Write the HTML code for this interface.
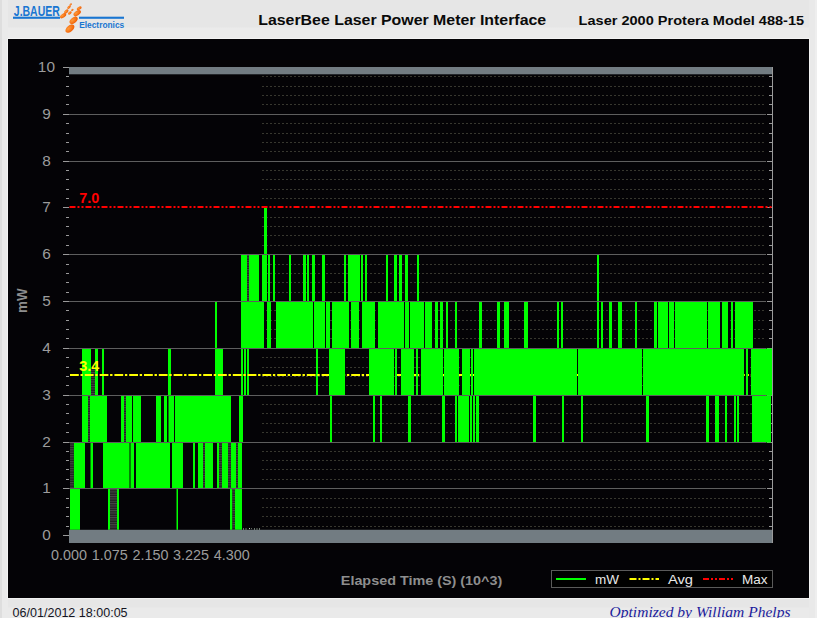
<!DOCTYPE html>
<html><head><meta charset="utf-8"><title>LaserBee Laser Power Meter Interface</title>
<style>
html,body{margin:0;padding:0;}
body{width:817px;height:618px;overflow:hidden;background:linear-gradient(180deg,#e6e6e6 0,#e6e6e6 27px,#ebebeb 28px,#ebebeb 39px,#e6e6e6 40px,#e6e6e6 607px,#eaeaea 608px);font-family:"Liberation Sans",sans-serif;position:relative;}
#plot{position:absolute;left:8px;top:39px;width:801px;height:559px;background:#040306;box-shadow:0 0 0 0.6px #f8f8f8;}
#edgeL{position:absolute;left:0;top:0;width:8px;height:618px;background:linear-gradient(90deg,#dedede 0,#dedede 2px,#eaeaea 2.5px,#eaeaea 8px);}
#edgeR{position:absolute;left:809px;top:0;width:8px;height:618px;background:linear-gradient(90deg,#e9e9e9 0,#e9e9e9 5.5px,#dcdcdc 6px,#eeeeee 6.5px,#eeeeee 8px);}
svg{position:absolute;left:0;top:0;}
svg text{font-family:"Liberation Sans",sans-serif;}
</style></head><body>
<div id="edgeL"></div><div id="edgeR"></div>
<div id="plot"></div>
<svg width="817" height="618" viewBox="0 0 817 618">
<defs>
<pattern id="hatch" width="4" height="2.34" patternUnits="userSpaceOnUse"><rect width="4" height="2.34" fill="#1f1f1f"/><rect y="0" width="4" height="1.1" fill="#454545"/></pattern>
<clipPath id="cl"><rect x="0" y="360" width="329" height="30"/></clipPath><clipPath id="cr"><rect x="329" y="360" width="450" height="30"/></clipPath>
<radialGradient id="og" cx="40%" cy="35%" r="70%"><stop offset="0" stop-color="#ff9a3a"/><stop offset="1" stop-color="#f05a00"/></radialGradient>
</defs>
<!-- header -->
<g id="logo">
<text x="13.8" y="16.3" font-size="14.6" font-weight="bold" fill="#1976d2" textLength="46" lengthAdjust="spacingAndGlyphs">J.BAUER</text>
<rect x="13" y="16.7" width="47" height="2.1" fill="#1976d2"/>
<rect x="79" y="16.7" width="45" height="2.1" fill="#1976d2"/>
<text x="79.2" y="28.4" font-size="9.4" font-weight="bold" fill="#1976d2" textLength="45" lengthAdjust="spacingAndGlyphs">Electronics</text>
<g fill="url(#og)">
<ellipse cx="69.9" cy="28.7" rx="5.3" ry="3.1" transform="rotate(-40 69.9 28.7)"/>
<ellipse cx="73.6" cy="20.3" rx="4.7" ry="2.8" transform="rotate(-40 73.6 20.3)"/>
<ellipse cx="77.2" cy="13.2" rx="4.2" ry="2.3" transform="rotate(-35 77.2 13.2)"/>
<ellipse cx="79.2" cy="8.3" rx="2.7" ry="1.5" transform="rotate(-30 79.2 8.3)"/>
<ellipse cx="63.1" cy="15.7" rx="3.5" ry="1.9" transform="rotate(-35 63.1 15.7)"/>
<ellipse cx="66.3" cy="11.5" rx="2.6" ry="1.5" transform="rotate(-40 66.3 11.5)"/>
<ellipse cx="69" cy="7.2" rx="2.1" ry="1.2" transform="rotate(-45 69 7.2)"/>
<ellipse cx="70.7" cy="4.4" rx="1.4" ry="0.9" transform="rotate(-45 70.7 4.4)"/>
<ellipse cx="69.8" cy="13" rx="2.1" ry="1.3" transform="rotate(-38 69.8 13)"/>
<ellipse cx="72.3" cy="10" rx="1.4" ry="0.9" transform="rotate(-38 72.3 10)"/>
</g>
</g>
<text x="258.2" y="24.6" font-size="14.2" font-weight="bold" fill="#0a0a0a" textLength="288" lengthAdjust="spacingAndGlyphs">LaserBee Laser Power Meter Interface</text>
<text x="578.6" y="25" font-size="13.5" font-weight="bold" fill="#0a0a0a" textLength="225.5" lengthAdjust="spacingAndGlyphs">Laser 2000 Protera Model 488-15</text>
<!-- chart -->
<path d="M262 526.5H766M262 516.5H766M262 507.5H766M262 498.5H766M262 479.5H766M262 469.5H766M262 460.5H766M262 451.5H766M262 432.5H766M262 423.5H766M262 413.5H766M262 404.5H766M262 385.5H766M262 376.5H766M262 367.5H766M262 357.5H766M262 338.5H766M262 329.5H766M262 320.5H766M262 310.5H766M262 292.5H766M262 282.5H766M262 273.5H766M262 264.5H766M262 245.5H766M262 235.5H766M262 226.5H766M262 217.5H766M262 198.5H766M262 189.5H766M262 179.5H766M262 170.5H766M262 151.5H766M262 142.5H766M262 133.5H766M262 123.5H766M262 104.5H766M262 95.5H766M262 86.5H766M262 76.5H766" stroke="#37372f" stroke-width="1" stroke-dasharray="2 2" fill="none"/><path d="M769 526.5H772.5M769 516.5H772.5M769 507.5H772.5M769 498.5H772.5M767 488.5H772.5M769 479.5H772.5M769 469.5H772.5M769 460.5H772.5M769 451.5H772.5M767 442.5H772.5M769 432.5H772.5M769 423.5H772.5M769 413.5H772.5M769 404.5H772.5M767 395.5H772.5M769 385.5H772.5M769 376.5H772.5M769 367.5H772.5M769 357.5H772.5M767 348.5H772.5M769 338.5H772.5M769 329.5H772.5M769 320.5H772.5M769 310.5H772.5M767 301.5H772.5M769 292.5H772.5M769 282.5H772.5M769 273.5H772.5M769 264.5H772.5M767 254.5H772.5M769 245.5H772.5M769 235.5H772.5M769 226.5H772.5M769 217.5H772.5M767 207.5H772.5M769 198.5H772.5M769 189.5H772.5M769 179.5H772.5M769 170.5H772.5M767 161.5H772.5M769 151.5H772.5M769 142.5H772.5M769 133.5H772.5M769 123.5H772.5M767 114.5H772.5M769 104.5H772.5M769 95.5H772.5M769 86.5H772.5M769 76.5H772.5M767 67.5H772.5" stroke="#9a9a9a" stroke-width="1" fill="none"/><path d="M70 375H772" stroke="#ffff00" stroke-width="2.2" stroke-dasharray="8.8 1.7 2.4 1.9" fill="none" clip-path="url(#cr)"/><rect x="70" y="488.5" width="10" height="41.3" fill="#00ff00"/><rect x="108" y="488.5" width="2" height="41.3" fill="#00ff00"/><rect x="117" y="488.5" width="2" height="41.3" fill="#00ff00"/><rect x="176.5" y="488.5" width="1.5" height="41.3" fill="#00ff00"/><rect x="230" y="488.5" width="2.5" height="41.3" fill="#00ff00"/><rect x="235" y="488.5" width="7" height="41.3" fill="#00ff00"/><rect x="110" y="488.5" width="7" height="41.3" fill="url(#hatch)"/><rect x="232.5" y="488.5" width="2.5" height="41.3" fill="url(#hatch)"/><rect x="73.7" y="442.5" width="11.3" height="46.0" fill="#00ff00"/><rect x="90.5" y="442.5" width="2.5" height="46.0" fill="#00ff00"/><rect x="103" y="442.5" width="26.5" height="46.0" fill="#00ff00"/><rect x="130.5" y="442.5" width="3.5" height="46.0" fill="#00ff00"/><rect x="136" y="442.5" width="34" height="46.0" fill="#00ff00"/><rect x="172" y="442.5" width="11" height="46.0" fill="#00ff00"/><rect x="193" y="442.5" width="2" height="46.0" fill="#00ff00"/><rect x="198" y="442.5" width="5" height="46.0" fill="#00ff00"/><rect x="205" y="442.5" width="8" height="46.0" fill="#00ff00"/><rect x="217" y="442.5" width="2" height="46.0" fill="#00ff00"/><rect x="222" y="442.5" width="6" height="46.0" fill="#00ff00"/><rect x="231" y="442.5" width="5" height="46.0" fill="#00ff00"/><rect x="238" y="442.5" width="4" height="46.0" fill="#00ff00"/><rect x="70" y="442.5" width="3.7" height="46.0" fill="url(#hatch)"/><rect x="203" y="442.5" width="2" height="46.0" fill="url(#hatch)"/><rect x="219" y="442.5" width="3" height="46.0" fill="url(#hatch)"/><rect x="228" y="442.5" width="3" height="46.0" fill="url(#hatch)"/><rect x="236" y="442.5" width="2" height="46.0" fill="url(#hatch)"/><rect x="82" y="395.5" width="6" height="47.0" fill="#00ff00"/><rect x="90" y="395.5" width="17" height="47.0" fill="#00ff00"/><rect x="121" y="395.5" width="3" height="47.0" fill="#00ff00"/><rect x="126" y="395.5" width="6" height="47.0" fill="#00ff00"/><rect x="133" y="395.5" width="8" height="47.0" fill="#00ff00"/><rect x="156" y="395.5" width="5" height="47.0" fill="#00ff00"/><rect x="164" y="395.5" width="3" height="47.0" fill="#00ff00"/><rect x="168.5" y="395.5" width="5.5" height="47.0" fill="#00ff00"/><rect x="175" y="395.5" width="56" height="47.0" fill="#00ff00"/><rect x="239" y="395.5" width="4" height="47.0" fill="#00ff00"/><rect x="330" y="395.5" width="2" height="47.0" fill="#00ff00"/><rect x="373" y="395.5" width="2" height="47.0" fill="#00ff00"/><rect x="380" y="395.5" width="2" height="47.0" fill="#00ff00"/><rect x="408" y="395.5" width="3" height="47.0" fill="#00ff00"/><rect x="442" y="395.5" width="3" height="47.0" fill="#00ff00"/><rect x="455" y="395.5" width="2" height="47.0" fill="#00ff00"/><rect x="458" y="395.5" width="11" height="47.0" fill="#00ff00"/><rect x="470" y="395.5" width="2" height="47.0" fill="#00ff00"/><rect x="473" y="395.5" width="2" height="47.0" fill="#00ff00"/><rect x="476" y="395.5" width="3" height="47.0" fill="#00ff00"/><rect x="533" y="395.5" width="3" height="47.0" fill="#00ff00"/><rect x="562" y="395.5" width="2" height="47.0" fill="#00ff00"/><rect x="581" y="395.5" width="2" height="47.0" fill="#00ff00"/><rect x="646" y="395.5" width="3" height="47.0" fill="#00ff00"/><rect x="706" y="395.5" width="3" height="47.0" fill="#00ff00"/><rect x="715" y="395.5" width="4" height="47.0" fill="#00ff00"/><rect x="725" y="395.5" width="2" height="47.0" fill="#00ff00"/><rect x="734" y="395.5" width="2" height="47.0" fill="#00ff00"/><rect x="737" y="395.5" width="2" height="47.0" fill="#00ff00"/><rect x="752" y="395.5" width="19" height="47.0" fill="#00ff00"/><rect x="88" y="395.5" width="2" height="47.0" fill="url(#hatch)"/><rect x="124" y="395.5" width="2" height="47.0" fill="url(#hatch)"/><rect x="82" y="348.5" width="9" height="47.0" fill="#00ff00"/><rect x="95" y="348.5" width="3" height="47.0" fill="#00ff00"/><rect x="102" y="348.5" width="2" height="47.0" fill="#00ff00"/><rect x="168" y="348.5" width="3" height="47.0" fill="#00ff00"/><rect x="215" y="348.5" width="8" height="47.0" fill="#00ff00"/><rect x="241" y="348.5" width="2" height="47.0" fill="#00ff00"/><rect x="244" y="348.5" width="2" height="47.0" fill="#00ff00"/><rect x="247" y="348.5" width="2" height="47.0" fill="#00ff00"/><rect x="316" y="348.5" width="2" height="47.0" fill="#00ff00"/><rect x="329" y="348.5" width="16" height="47.0" fill="#00ff00"/><rect x="369" y="348.5" width="25" height="47.0" fill="#00ff00"/><rect x="395" y="348.5" width="2" height="47.0" fill="#00ff00"/><rect x="401" y="348.5" width="13" height="47.0" fill="#00ff00"/><rect x="416" y="348.5" width="2" height="47.0" fill="#00ff00"/><rect x="421" y="348.5" width="22" height="47.0" fill="#00ff00"/><rect x="444" y="348.5" width="15" height="47.0" fill="#00ff00"/><rect x="462" y="348.5" width="8" height="47.0" fill="#00ff00"/><rect x="471" y="348.5" width="2" height="47.0" fill="#00ff00"/><rect x="474" y="348.5" width="103" height="47.0" fill="#00ff00"/><rect x="578" y="348.5" width="64" height="47.0" fill="#00ff00"/><rect x="643" y="348.5" width="101" height="47.0" fill="#00ff00"/><rect x="746" y="348.5" width="2" height="47.0" fill="#00ff00"/><rect x="751" y="348.5" width="21" height="47.0" fill="#00ff00"/><rect x="215" y="301.5" width="2" height="47.0" fill="#00ff00"/><rect x="241" y="301.5" width="23" height="47.0" fill="#00ff00"/><rect x="267" y="301.5" width="4" height="47.0" fill="#00ff00"/><rect x="276" y="301.5" width="37" height="47.0" fill="#00ff00"/><rect x="314" y="301.5" width="11" height="47.0" fill="#00ff00"/><rect x="326" y="301.5" width="4" height="47.0" fill="#00ff00"/><rect x="332" y="301.5" width="17" height="47.0" fill="#00ff00"/><rect x="351" y="301.5" width="8" height="47.0" fill="#00ff00"/><rect x="362" y="301.5" width="13" height="47.0" fill="#00ff00"/><rect x="378" y="301.5" width="26" height="47.0" fill="#00ff00"/><rect x="405" y="301.5" width="4" height="47.0" fill="#00ff00"/><rect x="410" y="301.5" width="14" height="47.0" fill="#00ff00"/><rect x="425" y="301.5" width="7" height="47.0" fill="#00ff00"/><rect x="435" y="301.5" width="3" height="47.0" fill="#00ff00"/><rect x="440" y="301.5" width="3" height="47.0" fill="#00ff00"/><rect x="446" y="301.5" width="2" height="47.0" fill="#00ff00"/><rect x="455" y="301.5" width="2" height="47.0" fill="#00ff00"/><rect x="479" y="301.5" width="3" height="47.0" fill="#00ff00"/><rect x="497" y="301.5" width="3" height="47.0" fill="#00ff00"/><rect x="504" y="301.5" width="5" height="47.0" fill="#00ff00"/><rect x="524" y="301.5" width="4" height="47.0" fill="#00ff00"/><rect x="557" y="301.5" width="2" height="47.0" fill="#00ff00"/><rect x="561" y="301.5" width="2" height="47.0" fill="#00ff00"/><rect x="597" y="301.5" width="2" height="47.0" fill="#00ff00"/><rect x="601" y="301.5" width="2" height="47.0" fill="#00ff00"/><rect x="609" y="301.5" width="3" height="47.0" fill="#00ff00"/><rect x="618" y="301.5" width="4" height="47.0" fill="#00ff00"/><rect x="635" y="301.5" width="2" height="47.0" fill="#00ff00"/><rect x="654" y="301.5" width="3" height="47.0" fill="#00ff00"/><rect x="658" y="301.5" width="10" height="47.0" fill="#00ff00"/><rect x="669" y="301.5" width="5" height="47.0" fill="#00ff00"/><rect x="675" y="301.5" width="32" height="47.0" fill="#00ff00"/><rect x="708" y="301.5" width="12" height="47.0" fill="#00ff00"/><rect x="722" y="301.5" width="6" height="47.0" fill="#00ff00"/><rect x="731" y="301.5" width="2" height="47.0" fill="#00ff00"/><rect x="735" y="301.5" width="18" height="47.0" fill="#00ff00"/><rect x="241" y="254.5" width="6" height="47.0" fill="#00ff00"/><rect x="249" y="254.5" width="10" height="47.0" fill="#00ff00"/><rect x="262" y="254.5" width="5" height="47.0" fill="#00ff00"/><rect x="268" y="254.5" width="2" height="47.0" fill="#00ff00"/><rect x="273" y="254.5" width="2" height="47.0" fill="#00ff00"/><rect x="289" y="254.5" width="2" height="47.0" fill="#00ff00"/><rect x="303" y="254.5" width="3" height="47.0" fill="#00ff00"/><rect x="307" y="254.5" width="2" height="47.0" fill="#00ff00"/><rect x="312" y="254.5" width="3" height="47.0" fill="#00ff00"/><rect x="322" y="254.5" width="3" height="47.0" fill="#00ff00"/><rect x="344" y="254.5" width="2" height="47.0" fill="#00ff00"/><rect x="348" y="254.5" width="12" height="47.0" fill="#00ff00"/><rect x="361" y="254.5" width="2" height="47.0" fill="#00ff00"/><rect x="365" y="254.5" width="2" height="47.0" fill="#00ff00"/><rect x="386" y="254.5" width="2" height="47.0" fill="#00ff00"/><rect x="394" y="254.5" width="3" height="47.0" fill="#00ff00"/><rect x="399" y="254.5" width="3" height="47.0" fill="#00ff00"/><rect x="405" y="254.5" width="3" height="47.0" fill="#00ff00"/><rect x="417" y="254.5" width="2" height="47.0" fill="#00ff00"/><rect x="597" y="254.5" width="2" height="47.0" fill="#00ff00"/><rect x="247" y="254.5" width="2" height="47.0" fill="url(#hatch)"/><rect x="264" y="207.5" width="3" height="47.0" fill="#00ff00"/><rect x="91" y="369" width="4" height="26.5" fill="url(#hatch)"/><path d="M243 529H247M249 528.6H252M254 529H260" stroke="#cfe8cf" stroke-width="1" stroke-dasharray="1 1.5" fill="none"/><path d="M69 488.5H766M69 442.5H766M69 395.5H766M69 348.5H766M69 301.5H766M69 254.5H766M69 161.5H766M69 114.5H766" stroke="#5e5e5e" stroke-width="1.1" fill="none"/><path d="M70 375H772" stroke="#ffff00" stroke-width="2.2" stroke-dasharray="8.8 1.7 2.4 1.9" fill="none" clip-path="url(#cl)"/><path d="M69.5 207H772" stroke="#ff0000" stroke-width="2" stroke-dasharray="6 2 2 2 2 2" fill="none"/><rect x="69" y="67" width="703" height="7.3" fill="#727c82"/><rect x="69" y="529.8" width="703" height="13.2" fill="#727c82"/><path d="M63 535.5H69M66 526.5H69M66 516.5H69M66 507.5H69M66 498.5H69M63 488.5H69M66 479.5H69M66 469.5H69M66 460.5H69M66 451.5H69M63 442.5H69M66 432.5H69M66 423.5H69M66 413.5H69M66 404.5H69M63 395.5H69M66 385.5H69M66 376.5H69M66 367.5H69M66 357.5H69M63 348.5H69M66 338.5H69M66 329.5H69M66 320.5H69M66 310.5H69M63 301.5H69M66 292.5H69M66 282.5H69M66 273.5H69M66 264.5H69M63 254.5H69M66 245.5H69M66 235.5H69M66 226.5H69M66 217.5H69M63 207.5H69M66 198.5H69M66 189.5H69M66 179.5H69M66 170.5H69M63 161.5H69M66 151.5H69M66 142.5H69M66 133.5H69M66 123.5H69M63 114.5H69M66 104.5H69M66 95.5H69M66 86.5H69M66 76.5H69M63 67.5H69" stroke="#9a9a9a" stroke-width="1" fill="none"/><path d="M772.5 67V543" stroke="#9a9a9a" stroke-width="1" fill="none"/><g font-size="14" fill="#9c9c9c"><text transform="translate(46.4,540.4) scale(1.1,1.04)" text-anchor="middle">0</text><text transform="translate(46.4,493.4) scale(1.1,1.04)" text-anchor="middle">1</text><text transform="translate(46.4,447.4) scale(1.1,1.04)" text-anchor="middle">2</text><text transform="translate(46.4,400.4) scale(1.1,1.04)" text-anchor="middle">3</text><text transform="translate(46.4,353.4) scale(1.1,1.04)" text-anchor="middle">4</text><text transform="translate(46.4,306.4) scale(1.1,1.04)" text-anchor="middle">5</text><text transform="translate(46.4,259.4) scale(1.1,1.04)" text-anchor="middle">6</text><text transform="translate(46.4,212.4) scale(1.1,1.04)" text-anchor="middle">7</text><text transform="translate(46.4,166.4) scale(1.1,1.04)" text-anchor="middle">8</text><text transform="translate(46.4,119.4) scale(1.1,1.04)" text-anchor="middle">9</text><text transform="translate(46.4,72.4) scale(1.1,1.04)" text-anchor="middle">10</text></g><g font-size="14" fill="#9c9c9c"><text x="69.0" y="560.2" text-anchor="middle" textLength="36" lengthAdjust="spacingAndGlyphs">0.000</text><text x="109.7" y="560.2" text-anchor="middle" textLength="36" lengthAdjust="spacingAndGlyphs">1.075</text><text x="150.4" y="560.2" text-anchor="middle" textLength="36" lengthAdjust="spacingAndGlyphs">2.150</text><text x="191.1" y="560.2" text-anchor="middle" textLength="36" lengthAdjust="spacingAndGlyphs">3.225</text><text x="231.8" y="560.2" text-anchor="middle" textLength="36" lengthAdjust="spacingAndGlyphs">4.300</text></g><text x="340.8" y="585" font-size="13.2" font-weight="bold" fill="#8e8e8e" textLength="161.5" lengthAdjust="spacingAndGlyphs">Elapsed Time (S) (10^3)</text><text transform="translate(27.4,313) rotate(-90)" font-size="14.2" font-weight="bold" fill="#8e8e8e" textLength="24.5" lengthAdjust="spacingAndGlyphs">mW</text><text x="79.3" y="203.2" font-size="14.5" textLength="20" lengthAdjust="spacingAndGlyphs" font-weight="bold" fill="#ff0000">7.0</text><text x="79.3" y="370.8" font-size="14.5" textLength="20" lengthAdjust="spacingAndGlyphs" font-weight="bold" fill="#ffff00">3.4</text><rect x="551.5" y="570.5" width="221" height="17" fill="#000" stroke="#5a5a5a" stroke-width="1"/><path d="M556 579H586" stroke="#00ff00" stroke-width="2"/><path d="M629.5 579H659" stroke="#ffff00" stroke-width="2" stroke-dasharray="7 2 2 2"/><path d="M703 579H733" stroke="#ff0000" stroke-width="2" stroke-dasharray="6 2 2 2 2 2"/><g font-size="13.5" fill="#e8e8e8"><text x="595" y="584">mW</text><text x="668" y="584" textLength="25" lengthAdjust="spacingAndGlyphs">Avg</text><text x="742" y="584">Max</text></g>
<!-- footer -->
<text x="12.6" y="616.6" font-size="12.8" fill="#15151f" textLength="115" lengthAdjust="spacingAndGlyphs">06/01/2012 18:00:05</text>
<text x="609.5" y="616.5" font-size="14.5" font-style="italic" fill="#1c1c9c" style="font-family:'Liberation Serif',serif" textLength="181" lengthAdjust="spacingAndGlyphs">Optimized by William Phelps</text>
</svg>
</body></html>
